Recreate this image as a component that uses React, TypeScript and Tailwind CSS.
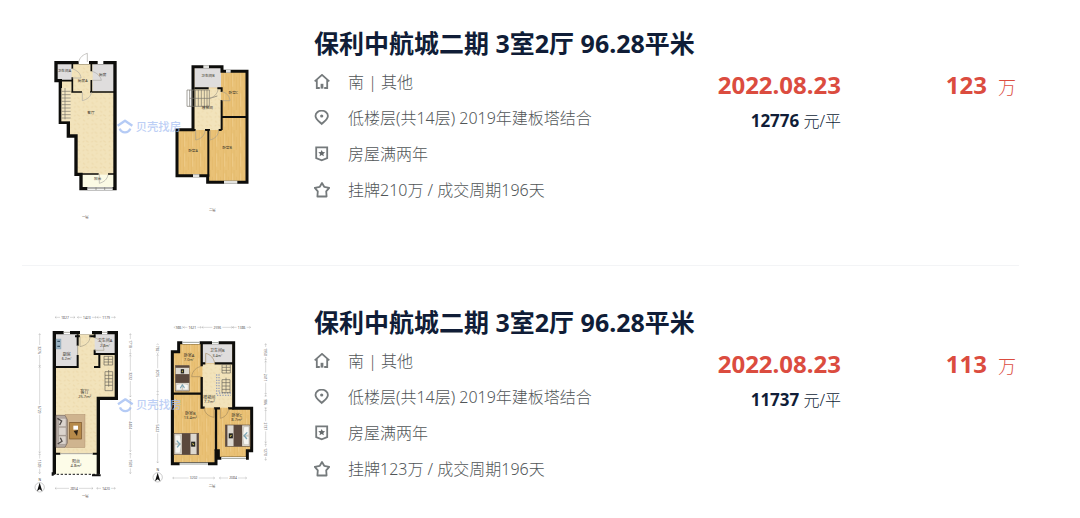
import type { ReactNode } from "react";

type Deal = {
  id: number;
  title: string;
  orientation: string;
  floor: string;
  tax: string;
  cycle: string;
  date: string;
  unitPrice: string;
  total: string;
  plan: ReactNode;
};

function Label({ x, y, size = 11, children }: { x: number; y: number; size?: number; children: string }) {
  return (
    <text x={x} y={y} fontSize={size} textAnchor="middle" fill="#3a352c">
      {children}
    </text>
  );
}

function Watermark({ x, y }: { x: number; y: number }) {
  return (
    <g transform={`translate(${x} ${y})`} opacity="0.75">
      <path d="M-22 -3 L0 -18 L22 -3" fill="none" stroke="#9dbaf2" strokeWidth="7" strokeLinejoin="round" />
      <path d="M-16 6 C-10 21 10 21 16 6" fill="none" stroke="#9dbaf2" strokeWidth="7" />
      <text x="32" y="12" fontSize="34" fill="#a9c1f3" fontWeight="500">贝壳找房</text>
    </g>
  );
}

function Patterns() {
  return (
    <defs>
      <pattern id="wood" width="24" height="60" patternUnits="userSpaceOnUse">
        <rect width="24" height="60" fill="#e9c176" />
        <path d="M4 0V60M12 0V34M19 20V60" stroke="#e3b767" strokeWidth="2" />
        <path d="M8 10V50" stroke="#eecb88" strokeWidth="3" />
      </pattern>
      <pattern id="stone" width="26" height="26" patternUnits="userSpaceOnUse">
        <rect width="26" height="26" fill="#f2e3bb" />
        <path d="M3 5l6 5M16 4l5 -3M12 16l7 5M2 21l5 -4" stroke="#eddaac" strokeWidth="3" />
      </pattern>
    </defs>
  );
}

function Compass({ x, y }: { x: number; y: number }) {
  return (
    <g transform={`translate(${x} ${y})`}>
      <Label x={0} y={-20} size={10}>N</Label>
      <circle r="14" fill="none" stroke="#999" strokeWidth="1.5" />
      <path d="M0 -14L8 12L0 6L-8 12Z" fill="#111" />
    </g>
  );
}

// dimension line with the measured lengths written along it
function Ruler({ x, y, vertical, marks }: { x: number; y: number; vertical?: boolean; marks: [number, number, string][] }) {
  return (
    <g transform={`translate(${x} ${y})${vertical ? " rotate(90)" : ""}`}>
      {marks.map(([start, end, text]) => {
        const mid = (start + end) / 2;
        return (
          <g key={start} stroke="#a3a3a3" strokeWidth="1.2" fill="none">
            <path d={`M${start} 0H${mid - 15}M${mid + 15} 0H${end}M${start + 4} -3l-4 3l4 3M${end - 4} -3l4 3l-4 3`} />
            <text x={mid} y="4" fontSize="10" textAnchor="middle" fill="#555" stroke="none">{text}</text>
          </g>
        );
      })}
    </g>
  );
}

function Bed({ x, y, flip, width = 72, height = 64 }: { x: number; y: number; flip?: boolean; width?: number; height?: number }) {
  return (
    <g transform={`translate(${flip ? x + width : x} ${y}) scale(${(flip ? -width : width) / 72} ${height / 64})`}>
      <rect width="72" height="64" fill="#ddd8cf" stroke="#65513f" strokeWidth="2" />
      <path d="M3 5h15l3 25H3zM3 34h18l-3 25H3z" fill="#f6f5f1" stroke="#9c9589" />
      <rect x="23" width="25" height="64" fill="#5b483d" />
      <rect x="66" width="6" height="64" fill="#5b483d" />
      <path d="M8 22l9 10l-8 10" stroke="#7ca6b6" strokeWidth="4" fill="none" />
      <rect x="50" y="25" width="12" height="15" fill="#23231f" />
      <path d="M54 30l4 5" stroke="#d5c254" strokeWidth="3" />
    </g>
  );
}

function SimplePlan() {
  return (
    <svg viewBox="0 0 834 612" className="h-auto w-full" role="img" aria-label="户型图" fontFamily="'Noto Sans', 'Noto Sans CJK SC', sans-serif">
      <Patterns />
      <g transform="translate(24 36)">
        <path d="M78 68H255V446H153V403H138V288H115V247H91V122H78Z" fill="url(#stone)" />
        <path d="M80 70H125V120H80ZM188 70H252V154H188Z" fill="#dfdddd" />
        <path d="M156 404H252V442H156Z" fill="#fbfae4" />
        <path d="M78 68H255V446H153V403H138V288H115V247H91V122H78Z" fill="none" stroke="#0d0d0b" strokeWidth="10" />
        <path d="M127 70V86M127 112V156M90 122H127M124 156H156M184 70V94M184 120V156M180 156H252M138 402H206M234 402H254" fill="none" stroke="#0d0d0b" strokeWidth="5" />
        <path d="M146 67H177M203 67H220" stroke="#fff" strokeWidth="10" />
        <path d="M146 66C150 50 160 44 172 40V66M127 86C142 92 152 100 153 114H127M186 94C200 98 212 108 214 121H186M157 156V182C172 178 183 170 184 156M208 402V430C222 426 232 418 234 404" fill="none" stroke="#aaa9a5" strokeWidth="2" />
        <path d="M172 446H248" stroke="#fff" strokeWidth="8" />
        <path d="M172 446H248M198 442V450M224 442V450" stroke="#77776f" strokeWidth="2" />
        <rect x="94" y="144" width="28" height="100" fill="#f3e6c2" />
        <path d="M95 154H122M95 164H122M95 174H122M95 184H122M95 194H122M95 204H122M95 214H122M95 224H122M95 234H122M105 144V238" stroke="#77736a" strokeWidth="2" />
        <Label x={103} y={95}>卫生间A</Label>
        <Label x={158} y={127}>厨房A</Label>
        <Label x={218} y={108}>厨房</Label>
        <Label x={183} y={223}>客厅</Label>
        <Label x={203} y={420}>阳台</Label>
        <Label x={166} y={534} size={10}>一层</Label>
      </g>
      <g transform="translate(264 66)">
        <path d="M249 49H337V66H411V397H294V377H200V239H249Z" fill="url(#wood)" />
        <path d="M253 115H333V240H253Z" fill="url(#stone)" />
        <path d="M253 53H333V113H253Z" fill="#dfdddd" />
        <path d="M249 50H336V64H411V397H293V377H201V239H249Z" fill="none" stroke="#0d0d0b" strokeWidth="9" />
        <path d="M253 115H296M322 115H335V126M335 150V240M335 201H410M295 240V380M200 240H257M285 240H300M326 240H335" fill="none" stroke="#0d0d0b" strokeWidth="6" />
        <path d="M280 50H297M348 64H362M249 377H268M342 397H382" stroke="#e2e2df" strokeWidth="9" />
        <path d="M231 120H298V169H231ZM239 120V169M247 120V169M256 120V169M265 120V169M274 120V169M283 120V169M291 120V169M239 145H300L322 138" fill="none" stroke="#77736a" strokeWidth="2" />
        <path d="M298 144C312 142 322 132 324 118M335 125C350 128 359 138 360 152H335M257 241V270C273 267 284 257 285 241M300 241V270C316 266 325 256 326 241" fill="none" stroke="#a79f8b" strokeWidth="2" />
        <Label x={294} y={82}>卫生间B</Label>
        <Label x={370} y={132}>卧室C</Label>
        <Label x={292} y={176}>楼梯间</Label>
        <Label x={249} y={306}>卧室A</Label>
        <Label x={351} y={296}>卧室B</Label>
        <Label x={307} y={484} size={10}>二层</Label>
        <Watermark x={45} y={230} />
      </g>
    </svg>
  );
}

function FurnishedPlan() {
  return (
    <svg viewBox="0 0 834 612" className="h-auto w-full" role="img" aria-label="户型图" fontFamily="'Noto Sans', 'Noto Sans CJK SC', sans-serif">
      <g transform="translate(-6 -6)">
        <Ruler x={0} y={37} marks={[[105, 165, "1827"], [172, 229, "1423"], [231, 286, "1179"]]} />
        <Ruler x={59} y={0} vertical marks={[[86, 184, "3276"], [184, 444, "6729"], [446, 506, "1509"]]} />
        <Ruler x={331} y={0} vertical marks={[[86, 148, "1718"], [150, 276, "3232"], [282, 440, "4404"], [444, 506, "1509"]]} />
        <Ruler x={0} y={550} marks={[[105, 219, "2854"], [230, 286, "1420"]]} />
        <Compass x={59} y={547} />
        <path d="M101 83H289V281H235V446H101Z" fill="url(#stone)" />
        <path d="M105 86H172V184H105ZM224 86H286V145H224Z" fill="#dfdddd" />
        <path d="M104 448H235V508H104Z" fill="#fdfce8" />
        <path d="M103 508V83H289V280H235V508" fill="none" stroke="#0d0d0b" strokeWidth="10" />
        <path d="M104 186H173V150M173 122V88M224 88V98M224 134V147H286M238 148V186H222M104 446H121M218 446H234" fill="none" stroke="#0d0d0b" strokeWidth="6" />
        <path d="M180 83H216M131 83H150M246 83H262" stroke="#fff" strokeWidth="10" />
        <path d="M131 82H150M246 82H262M121 446H218M173 122V150" stroke="#aaa89f" strokeWidth="3" />
        <path d="M98 508H242" stroke="#444" strokeWidth="4" strokeDasharray="7 5" />
        <path d="M98 512V502M216 511H242" stroke="#111" strokeWidth="6" />
        <path d="M165 94H180M208 94H223" stroke="#0d0d0b" strokeWidth="6" />
        <path d="M180 94V125C199 121 210 111 210 94M224 136H252C250 117 241 104 224 98" fill="none" stroke="#a8a18d" strokeWidth="2" />
        <rect x="108" y="102" width="15" height="30" fill="#9db5c5" stroke="#7c98aa" />
        <path d="M112 109H120M112 124H120" stroke="#3d5567" strokeWidth="4" />
        <path d="M252 154H278V180H252ZM252 163H278M252 171H278M265 154V180M255 200H278V257H255ZM255 211H278M255 221H278M255 231H278M255 241H278M266 195V245" fill="none" stroke="#67635a" strokeWidth="2" />
        <rect x="137" y="328" width="58" height="100" fill="#cfb48f" stroke="#9d8061" />
        <rect x="149" y="352" width="35" height="50" fill="#b68a4a" stroke="#765229" strokeWidth="2" />
        <path d="M160 362h14v12h-14z" fill="#fff" />
        <path d="M161 378l13 -3l-3 18z" fill="#2a2117" />
        <path d="M108 331H135L142 344V414L135 427H108Z" fill="#b4aaa3" stroke="#74645a" strokeWidth="2" />
        <path d="M116 340H138V365H116ZM116 367H138V391H116ZM116 393H138V418H116Z" fill="#dbd4ce" stroke="#80736a" />
        <path d="M112 340l13 8l-6 12M113 417l13 -8l-5 -11" fill="none" stroke="#514b48" strokeWidth="4" />
        <Label x={140} y={152} size={12}>厨房</Label>
        <Label x={140} y={164} size={11}>6.2m²</Label>
        <Label x={255} y={112} size={12}>卫生间A</Label>
        <Label x={255} y={126} size={11}>2.8m²</Label>
        <Label x={194} y={265} size={13}>客厅</Label>
        <Label x={194} y={279} size={12}>25.7m²</Label>
        <Label x={168} y={474} size={12}>阳台</Label>
        <Label x={168} y={487} size={12}>4.8m²</Label>
        <Label x={196} y={576} size={10}>一层</Label>
      </g>
      <g transform="translate(354 24)">
        <Ruler x={0} y={37} marks={[[102, 130, "986"], [130, 184, "1621"], [186, 278, "2596"], [278, 332, "1386"]]} />
        <Ruler x={53} y={0} vertical marks={[[86, 116, "782"], [118, 232, "3075"], [236, 444, "5422"]]} />
        <Ruler x={377} y={0} vertical marks={[[86, 136, "1950"], [138, 238, "2411"], [240, 282, "986"], [284, 384, "2737"], [386, 436, "1270"]]} />
        <Ruler x={0} y={489} marks={[[98, 224, "3202"], [238, 320, "2084"]]} />
        <Compass x={53} y={487} />
        <path d="M97 108H117V84H281V280H335V407H322V430H235V407H228V446H97Z" fill="url(#wood)" />
        <path d="M187 147H277V278H187Z" fill="url(#stone)" />
        <path d="M187 87H277V145H187Z" fill="#dfdddd" />
        <path d="M97 110H116V83H281V280H335V407H322V430H235V407H228V446H97Z" fill="none" stroke="#0d0d0b" strokeWidth="9" />
        <path d="M185 84V154M185 186V278H194M186 145H196M224 145H280M98 236H184M222 280H240M264 280H281M228 278V408M97 446V236" fill="none" stroke="#0d0d0b" strokeWidth="7" />
        <path d="M127 82H179M119 448H204M244 431H318M216 83H236" stroke="#fff" strokeWidth="10" />
        <path d="M127 82H179M119 447H204M244 430H318M216 83H236" stroke="#9ba09b" strokeWidth="3" />
        <path d="M185 185H155C157 167 170 156 185 154M197 145V115C211 118 222 130 224 145M222 278V307C204 304 194 294 192 278M241 280V310C257 306 265 294 266 280" fill="none" stroke="#a68d61" strokeWidth="2" />
        <path d="M230 178V241H273M237 178V234H273" fill="none" stroke="#9ca4ba" strokeWidth="4" strokeDasharray="4 4" />
        <path d="M246 149H271V174H246ZM246 157H271M246 166H271M259 149V174M246 194H270V233H246ZM246 203H270M246 213H270M246 223H270M258 188V230" fill="none" stroke="#67635a" strokeWidth="2" />
        <g transform="translate(106 228) rotate(-90)">
          <Bed x={0} y={0} width={76} height={42} />
        </g>
        <Bed x={102} y={355} width={74} />
        <Bed x={256} y={330} width={74} flip />
        <Label x={147} y={125} size={12}>卧室A</Label>
        <Label x={147} y={138} size={11}>7.0m²</Label>
        <Label x={232} y={112} size={12}>卫生间B</Label>
        <Label x={232} y={125} size={11}>3.4m²</Label>
        <Label x={208} y={252} size={12}>楼梯间</Label>
        <Label x={208} y={264} size={12}>7.7m²</Label>
        <Label x={151} y={300} size={12}>卧室B</Label>
        <Label x={151} y={313} size={12}>13.4m²</Label>
        <Label x={290} y={306} size={12}>卧室C</Label>
        <Label x={290} y={319} size={12}>8.7m²</Label>
        <Label x={216} y={516} size={10}>二层</Label>
      </g>
      <Watermark x={310} y={295} />
    </svg>
  );
}

function Icon({ children }: { children: ReactNode }) {
  return (
    <svg width="16" height="16" viewBox="0 0 16 16" fill="none" stroke="#757a7c" strokeWidth="1.8" className="shrink-0" aria-hidden="true">
      {children}
    </svg>
  );
}

const HomeIcon = () => (
  <Icon>
    <path d="M.7 7.4 8 .9l7.3 6.5M2.8 6v8h3M13.2 6v8h-3" />
    <path d="M6.6 14.6v-4.8h2.8v4.8z" fill="#757a7c" stroke="none" />
  </Icon>
);

const PinIcon = () => (
  <Icon>
    <path d="M7.7 14C5.4 11.6 1.5 9 1.5 5.9a6.2 5.2 0 0 1 12.4 0c0 3.1-3.9 5.7-6.2 8.1z" />
    <circle cx="7.7" cy="6" r="1.6" fill="#757a7c" stroke="none" />
  </Icon>
);

const BadgeIcon = () => (
  <Icon>
    <path d="M2.2 1.4h11v10.8l-5.5 2.2-5.5-2.2z" />
    <path d="m7.7 3.9 1 2.2 2.4.2-1.8 1.6.6 2.4-2.2-1.3-2.2 1.3.6-2.4-1.8-1.6 2.4-.2z" fill="#656a6c" stroke="none" />
  </Icon>
);

const StarIcon = () => (
  <Icon>
    <path d="m8 1 2.2 3.8 5 1-3 3.5.4 5.2H3.4l.4-5.2-3-3.5 5-1z" strokeLinejoin="round" />
  </Icon>
);

const deals: Deal[] = [
  {
    id: 1,
    title: "保利中航城二期 3室2厅 96.28平米",
    orientation: "南 | 其他",
    floor: "低楼层(共14层) 2019年建板塔结合",
    tax: "房屋满两年",
    cycle: "挂牌210万 / 成交周期196天",
    date: "2022.08.23",
    unitPrice: "12776",
    total: "123",
    plan: <SimplePlan />
  },
  {
    id: 2,
    title: "保利中航城二期 3室2厅 96.28平米",
    orientation: "南 | 其他",
    floor: "低楼层(共14层) 2019年建板塔结合",
    tax: "房屋满两年",
    cycle: "挂牌123万 / 成交周期196天",
    date: "2022.08.23",
    unitPrice: "11737",
    total: "113",
    plan: <FurnishedPlan />
  }
];

function InfoRow({ icon, children }: { icon: ReactNode; children: ReactNode }) {
  return (
    <li className="flex h-9 items-center gap-[18px]">
      {icon}
      <span>{children}</span>
    </li>
  );
}

function DealItem({ deal }: { deal: Deal }) {
  return (
    <li className="flex border-b border-gray-100 pt-[41px] pb-[33px] first:pt-7 last:border-b-0 last:pb-0">
      <div className="mr-[14px] w-[278px] shrink-0">{deal.plan}</div>
      <div className="min-w-0 flex-1">
        <h2 className="text-[25px] leading-[30px] font-bold whitespace-nowrap text-[#101d37]">{deal.title}</h2>
        <ul className="mt-1.5 text-base font-light text-[#515658]">
          <InfoRow icon={<HomeIcon />}>{deal.orientation}</InfoRow>
          <InfoRow icon={<PinIcon />}>{deal.floor}</InfoRow>
          <InfoRow icon={<BadgeIcon />}>{deal.tax}</InfoRow>
          <InfoRow icon={<StarIcon />}>{deal.cycle}</InfoRow>
        </ul>
      </div>
      <div className="shrink-0 pt-[39px] text-right">
        <p className="text-2xl leading-9 font-bold text-[#db4c3f]">{deal.date}</p>
        <p className="text-base leading-9 font-light text-[#101d37]">
          <span className="text-[17px] font-bold">{deal.unitPrice}</span> 元/平
        </p>
      </div>
      <p className="w-[178px] shrink-0 pt-[39px] pr-[3px] text-right leading-9 text-[#db4c3f]">
        <span className="mr-[11px] text-2xl leading-9 font-bold">{deal.total}</span>
        <span className="text-lg leading-9 font-light">万</span>
      </p>
    </li>
  );
}

export default function App() {
  return (
    <main className="bg-white pr-[61px] pl-[22px] font-['Noto_Sans','Noto_Sans_CJK_SC',sans-serif]">
      <ul>
        {deals.map((deal) => (
          <DealItem key={deal.id} deal={deal} />
        ))}
      </ul>
    </main>
  );
}
